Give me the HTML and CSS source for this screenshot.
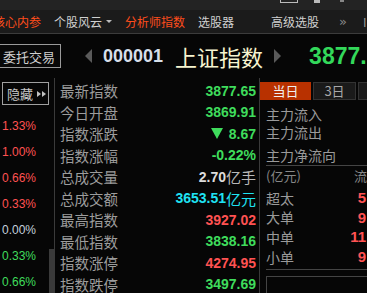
FILE: index.html
```html
<!DOCTYPE html>
<html lang="zh-CN">
<head>
    <meta charset="UTF-8">
    <title>上证指数</title>
    <link rel="stylesheet" href="styles.css">
</head>
<body>
    <div class="titlebar">
        <span class="win-btn win-min"></span>
        <span class="win-btn win-max"></span>
        <span class="win-btn win-close"></span>
    </div>
    <div class="nav">
        <span class="nav-item hot first">核心内参</span>
        <span class="nav-item">个股风云<i class="caret"></i></span>
        <span class="nav-item hot">分析师指数</span>
        <span class="nav-item">选股器</span>
        <span class="nav-item wide">高级选股</span>
        <span class="nav-item more">»</span>
        <span class="nav-item edge">I</span>
    </div>

    <div class="quote">
        <button class="trade-btn">委托交易</button>
        <span class="arrow arrow-left"></span>
        <span class="code">000001</span>
        <span class="name">上证指数</span>
        <span class="arrow arrow-right"></span>
        <span class="price">3877.65</span>
    </div>

    <div class="main">
        <div class="side">
            <div class="hide-btn"><span>隐藏</span><span class="dbl"><i></i><i></i></span></div>
            <ul class="ticks">
                <li class="up">1.33%</li>
                <li class="up">1.00%</li>
                <li class="up">0.66%</li>
                <li class="up">0.33%</li>
                <li class="flat">0.00%</li>
                <li class="down">0.33%</li>
                <li class="down">0.66%</li>
            </ul>
            <div class="scroll"></div>
        </div>

        <div class="stats">
            <div class="row"><span class="label">最新指数</span><span class="val down">3877.65</span></div>
            <div class="row"><span class="label">今日开盘</span><span class="val down">3869.91</span></div>
            <div class="row"><span class="label">指数涨跌</span><span class="val down"><i class="tri"></i>8.67</span></div>
            <div class="row"><span class="label">指数涨幅</span><span class="val down">-0.22%</span></div>
            <div class="row"><span class="label">总成交量</span><span class="val plain">2.70<span class="unit">亿手</span></span></div>
            <div class="row"><span class="label">总成交额</span><span class="val cyan">3653.51<span class="unit">亿元</span></span></div>
            <div class="row"><span class="label">最高指数</span><span class="val up">3927.02</span></div>
            <div class="row"><span class="label">最低指数</span><span class="val down">3838.16</span></div>
            <div class="row"><span class="label">指数涨停</span><span class="val up">4274.95</span></div>
            <div class="row"><span class="label">指数跌停</span><span class="val down">3497.69</span></div>
        </div>

        <div class="flow">
            <div class="tabs">
                <span class="tab active">当日</span>
                <span class="tab">3日</span>
                <span class="tab"></span>
            </div>
            <div class="flow-label first">主力流入</div>
            <div class="flow-label">主力流出</div>
            <div class="flow-label gap">主力净流向</div>
            <div class="flow-head"><span>(亿元)</span><span>流</span></div>
            <div class="order"><span>超太</span><span class="num">5</span></div>
            <div class="order"><span>大单</span><span class="num">9</span></div>
            <div class="order"><span>中单</span><span class="num">11</span></div>
            <div class="order"><span>小单</span><span class="num">9</span></div>
            <div class="flow-box"></div>
        </div>
    </div>
</body>
</html>
```

FILE: styles.css
```css
body {
    margin: 0;
    width: 367px;
    height: 293px;
    overflow: hidden;
    background: #060606;
    font-family: "Noto Sans CJK SC", "Liberation Sans", sans-serif;
    color: #a0a0a0;
}
.titlebar {
    height: 10px;
    background: #232323;
    display: flex;
    align-items: flex-start;
    padding-left: 280px;
}
.win-btn {
    display: block;
    height: 3px;
}
.win-min {
    width: 16px;
    border: 1px solid #bbb;
    border-top: none;
    height: 2px;
}
.win-max {
    width: 6px;
    background: #bbb;
    margin-left: 16px;
}
.win-close {
    width: 4px;
    background: #888;
    margin-left: 20px;
    height: 2px;
}
.nav {
    height: 23px;
    background: #1b1b1b;
    border-bottom: 1px solid #3c3c3c;
    display: flex;
    align-items: center;
    font-size: 12px;
    color: #d0d0d0;
    white-space: nowrap;
    overflow: hidden;
}
.nav-item {
    margin-right: 13px;
    display: flex;
    align-items: center;
    flex-shrink: 0;
}
.nav-item.first {
    margin-left: -7px;
}
.nav-item.hot {
    color: #ff4d1c;
}
.nav-item.wide {
    margin-left: 24px;
    margin-right: 20px;
}
.nav-item.more {
    font-family: "DejaVu Sans", sans-serif;
    color: #888;
    font-size: 13px;
    margin-right: 16px;
}
.nav-item.edge {
    color: #999;
}
.caret {
    width: 0;
    height: 0;
    border-left: 3px solid transparent;
    border-right: 3px solid transparent;
    border-top: 3px solid #bbb;
    margin-left: 4px;
}
.quote {
    height: 44px;
    display: flex;
    align-items: center;
    white-space: nowrap;
    overflow: hidden;
}
.quote > * {
    flex-shrink: 0;
}
.trade-btn {
    margin-left: -1px;
    width: 62px;
    height: 24px;
    background: #080808;
    border: 1px solid #9a9a9a;
    color: #cfcfcf;
    font-family: "Noto Sans CJK SC", sans-serif;
    font-size: 13px;
    padding: 0 0 0 3px;
    text-align: left;
}
.arrow {
    width: 0;
    height: 0;
    border-top: 7px solid transparent;
    border-bottom: 7px solid transparent;
}
.arrow-left {
    border-right: 7px solid #5a5a5a;
    margin-left: 24px;
}
.arrow-right {
    border-left: 7px solid #5a5a5a;
    margin-left: 11px;
}
.code {
    margin-left: 11px;
    font-family: "Liberation Sans", sans-serif;
    font-weight: bold;
    font-size: 18px;
    color: #d6dfe9;
}
.name {
    margin-left: 12px;
    font-size: 22px;
    color: #f6f4cf;
}
.price {
    margin-left: 28px;
    font-family: "Liberation Sans", sans-serif;
    font-weight: bold;
    font-size: 23px;
    color: #33d85a;
}
.main {
    display: grid;
    grid-template-columns: 55px 205px 1fr;
    height: 215px;
}
.side {
    border-right: 1px solid #3a3a3a;
    position: relative;
}
.hide-btn {
    margin: 4px 0 0 2px;
    width: 47px;
    height: 23px;
    box-sizing: border-box;
    border: 1px solid #a0a0a0;
    font-size: 13px;
    color: #c8c8c8;
    display: flex;
    align-items: center;
    padding-left: 4px;
}
.dbl {
    display: flex;
    flex-shrink: 0;
    margin-left: 4px;
}
.dbl i {
    display: block;
    width: 0;
    height: 0;
    border-top: 3px solid transparent;
    border-bottom: 3px solid transparent;
    border-left: 4px solid #c0c0c0;
    margin-right: 1px;
}
.ticks {
    list-style: none;
    margin: 8px 0 0;
    padding: 0 0 0 2px;
    font-family: "Liberation Sans", sans-serif;
    font-size: 12px;
}
.ticks li {
    height: 26px;
    line-height: 26px;
}
.scroll {
    position: absolute;
    right: 0;
    top: 171px;
    bottom: 0;
    width: 5px;
    background: #3a3a3a;
}
.up { color: #ff5252; }
.down { color: #3fdc5c; }
.flat { color: #c4d0dc; }
.cyan { color: #1fe2f2; }
.plain { color: #dcdcdc; }
.stats {
    border-right: 1px solid #3a3a3a;
    padding: 2px 3px 0 5px;
}
.row {
    height: 21.5px;
    display: flex;
    align-items: center;
    justify-content: space-between;
}
.label {
    font-size: 14.5px;
    color: #9c9c9c;
}
.val {
    font-family: "Liberation Sans", sans-serif;
    font-weight: bold;
    font-size: 14px;
    display: flex;
    align-items: center;
}
.tri {
    display: block;
    width: 0;
    height: 0;
    border-left: 6px solid transparent;
    border-right: 6px solid transparent;
    border-top: 11px solid #3fdc5c;
    margin-right: 6px;
}
.unit {
    font-family: "Noto Sans CJK SC", sans-serif;
    font-weight: normal;
    font-size: 15px;
}
.plain .unit {
    color: #b8b8b8;
}
.flow {
    font-size: 14px;
    color: #9a9a9a;
    white-space: nowrap;
    overflow: hidden;
}
.tabs {
    display: flex;
    margin-top: 4px;
    height: 18px;
    gap: 2px;
}
.tab {
    flex-shrink: 0;
    width: 43px;
    box-sizing: border-box;
    background: #1a1a1a;
    border: 1px solid #333;
    color: #a8a8a8;
    font-size: 13px;
    text-align: center;
    line-height: 16px;
}
.tab.active {
    width: 51px;
    background: #b83100;
    border-color: #b83100;
    color: #f0f0f0;
}
.flow-label {
    height: 18px;
    line-height: 18px;
    padding-left: 6px;
}
.flow-label.first {
    margin-top: 5px;
}
.flow-label.gap {
    margin-top: 5px;
}
.flow-head {
    border-top: 1px solid #444;
    margin: 1px 0 3px 6px;
    height: 19px;
    line-height: 19px;
    display: flex;
    justify-content: space-between;
    color: #888;
    font-size: 13px;
}
.order {
    height: 19.6px;
    display: flex;
    align-items: center;
    justify-content: space-between;
    padding: 0 1px 0 6px;
}
.num {
    font-family: "Liberation Sans", sans-serif;
    font-weight: bold;
    font-size: 15px;
    color: #ff5252;
}
.flow-box {
    margin: 3px 0 0 6px;
    border-top: 1px solid #444;
    height: 6px;
    position: relative;
}
.flow-box::after {
    content: "";
    position: absolute;
    left: 0;
    right: -2px;
    top: 6px;
    height: 30px;
    border: 1px solid #444;
}
```
